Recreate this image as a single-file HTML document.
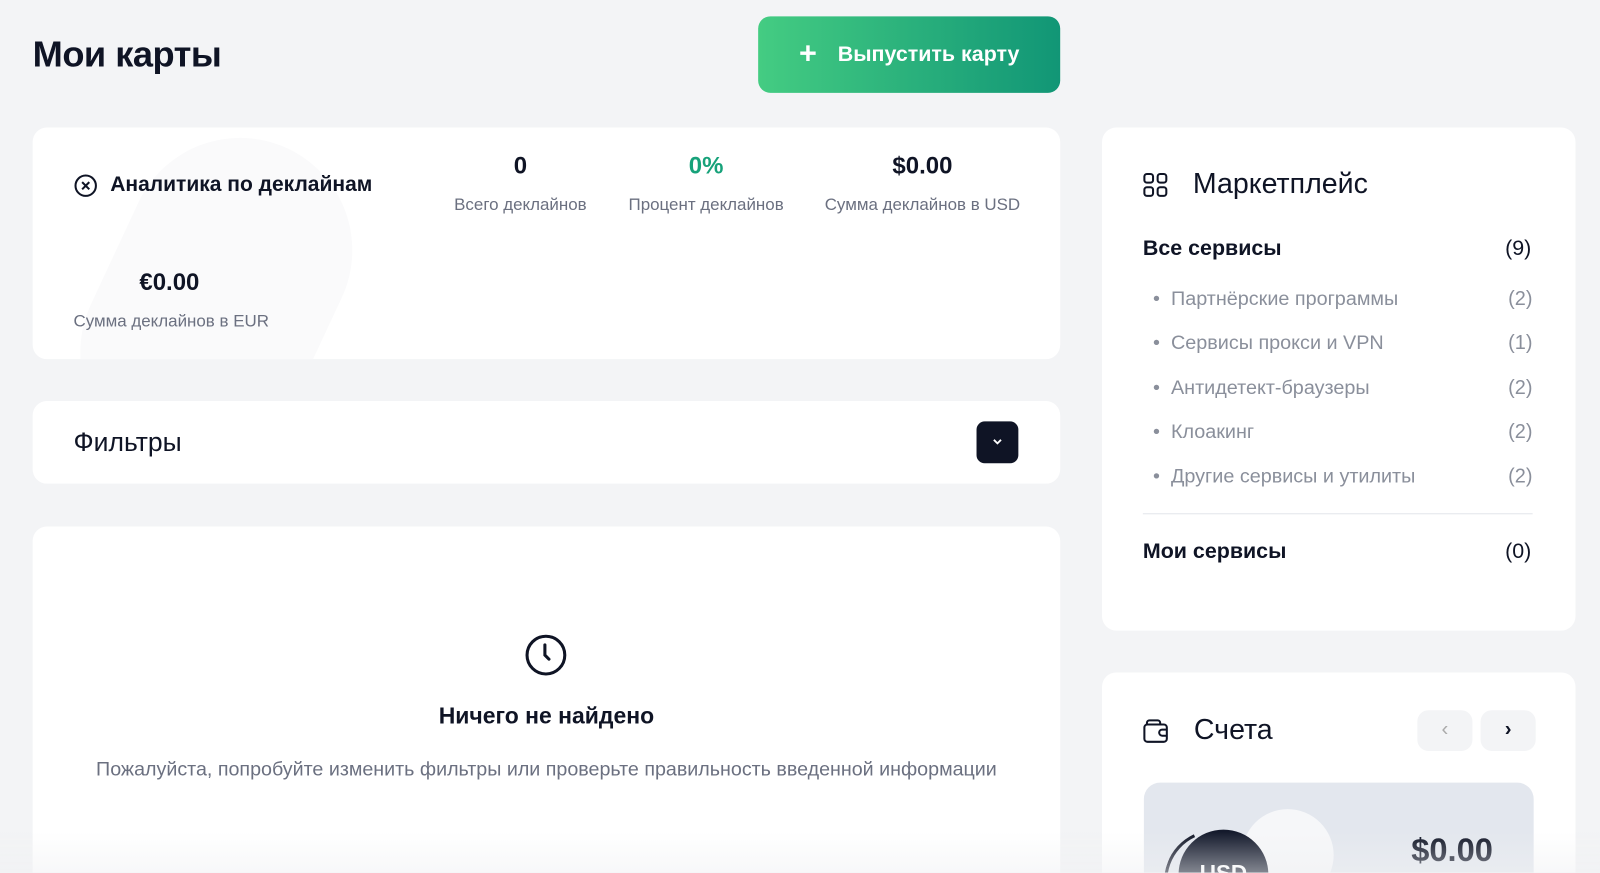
<!DOCTYPE html>
<html><head><meta charset="utf-8"><style>
*{box-sizing:border-box;margin:0;padding:0}
html,body{width:1600px;height:873px;overflow:hidden}
body{background:#f3f4f6;font-family:"Liberation Sans","Noto Sans CJK SC",sans-serif;color:#0f1425;position:relative}
#w{position:absolute;left:0;top:0;width:1568px;height:855px;overflow:hidden;transform:scale(1.0204);transform-origin:0 0}
.a{position:absolute}
.card{position:absolute;background:#fff;border-radius:14px}
.b{font-weight:bold}
.g{color:#6b7080}
.li{position:absolute;left:1130px;font-size:19.4px;color:#8a8f9b}
.cnt{position:absolute;left:1478px;font-size:19.5px;color:#8a8f9b}
</style></head><body><div id="w">
<div class="a b" style="left:32px;top:33px;font-size:35.5px;letter-spacing:-0.5px">Мои карты</div>
<div class="a" style="left:743px;top:16px;width:296px;height:75px;border-radius:12px;background:linear-gradient(90deg,#44cc82,#119676);color:#fff;font-size:21px;font-weight:bold;">
<div class="a" style="left:40px;top:24px;font-size:30px;line-height:26px">+</div>
<div class="a" style="left:78px;top:26px">Выпустить карту</div></div>

<div class="card" style="left:32px;top:125px;width:1007px;height:227px;overflow:hidden">
<div class="a" style="left:70px;top:5px;width:220px;height:330px;border-radius:115px;background:#fafafb;transform:rotate(25deg)"></div>
<svg class="a" style="left:40px;top:45px" width="24" height="24" viewBox="0 0 24 24" fill="none" stroke="#0f1425" stroke-width="2"><circle cx="12" cy="12" r="10"/><path d="M8.5 8.5l7 7M15.5 8.5l-7 7"/></svg>
<div class="a b" style="left:76px;top:44px;font-size:20.6px">Аналитика по деклайнам</div>
<div class="a b" style="left:412px;width:132px;text-align:center;top:24px;font-size:23.5px">0</div>
<div class="a g" style="left:390px;width:176px;text-align:center;top:66px;font-size:16.6px">Всего деклайнов</div>
<div class="a b" style="left:580px;width:160px;text-align:center;top:24px;font-size:23.5px;color:#17a27a">0%</div>
<div class="a g" style="left:560px;width:200px;text-align:center;top:66px;font-size:16.6px">Процент деклайнов</div>
<div class="a b" style="left:772px;width:200px;text-align:center;top:24px;font-size:23.5px">$0.00</div>
<div class="a g" style="left:752px;width:240px;text-align:center;top:66px;font-size:16.6px">Сумма деклайнов в USD</div>
<div class="a b" style="left:40px;width:188px;text-align:center;top:138px;font-size:23.5px">€0.00</div>
<div class="a g" style="left:40px;top:180px;font-size:16.6px">Сумма деклайнов в EUR</div>
</div>

<div class="card" style="left:32px;top:393px;width:1007px;height:81px">
<div class="a" style="left:40px;top:25px;font-size:26px">Фильтры</div>
<div class="a" style="left:925px;top:20px;width:41px;height:41px;border-radius:8px;background:#0f1425"><svg class="a" style="left:15px;top:16px" width="11" height="8" viewBox="0 0 11 8"><path d="M2 2l3.5 3.5L9 2" stroke="#fff" stroke-width="1.8" fill="none"/></svg></div>
</div>

<div class="card" style="left:32px;top:516px;width:1007px;height:339px;border-radius:14px 14px 0 0">
<svg class="a" style="left:482px;top:105px" width="42" height="42" viewBox="0 0 42 42" fill="none" stroke="#0f1425" stroke-width="3"><circle cx="21" cy="21" r="18.5"/><path d="M20 11v10l4 4" stroke-linecap="round"/></svg>
<div class="a b" style="left:0;width:1007px;text-align:center;top:173px;font-size:22.5px">Ничего не найдено</div>
<div class="a g" style="left:0;width:1007px;text-align:center;top:228px;font-size:19.3px">Пожалуйста, попробуйте изменить фильтры или проверьте правильность введенной информации</div>
</div>

<div class="card" style="left:1080px;top:125px;width:464px;height:493px">
<svg class="a" style="left:40px;top:44px" width="25" height="25" viewBox="0 0 25 25" fill="none" stroke="#0f1425" stroke-width="2"><rect x="1.5" y="1.5" width="8.5" height="8.5" rx="2.5"/><rect x="14.5" y="1.5" width="8.5" height="8.5" rx="2.5"/><rect x="1.5" y="14.5" width="8.5" height="8.5" rx="2.5"/><rect x="14.5" y="14.5" width="8.5" height="8.5" rx="2.5"/></svg>
<div class="a" style="left:89px;top:39px;font-size:28px">Маркетплейс</div>
<div class="a b" style="left:40px;top:107px;font-size:21px">Все сервисы</div>
<div class="a" style="left:395px;top:107px;font-size:21px">(9)</div>
<div class="a" style="left:40px;top:378px;width:382px;height:1px;background:#e3e5ea"></div>
<div class="a b" style="left:40px;top:404px;font-size:21px">Мои сервисы</div>
<div class="a" style="left:395px;top:404px;font-size:21px">(0)</div>
</div>
<div class="li" style="top:282px">•&nbsp;&nbsp;Партнёрские программы</div><div class="cnt" style="top:282px">(2)</div>
<div class="li" style="top:325px">•&nbsp;&nbsp;Сервисы прокси и VPN</div><div class="cnt" style="top:325px">(1)</div>
<div class="li" style="top:369px">•&nbsp;&nbsp;Антидетект-браузеры</div><div class="cnt" style="top:369px">(2)</div>
<div class="li" style="top:412px">•&nbsp;&nbsp;Клоакинг</div><div class="cnt" style="top:412px">(2)</div>
<div class="li" style="top:456px">•&nbsp;&nbsp;Другие сервисы и утилиты</div><div class="cnt" style="top:456px">(2)</div>

<div class="card" style="left:1080px;top:659px;width:464px;height:196px;overflow:hidden;border-radius:14px 14px 0 0">
<svg class="a" style="left:40px;top:44px" width="26" height="26" viewBox="0 0 26 26" fill="none" stroke="#0f1425" stroke-width="2"><path d="M4 8V5.5A2.5 2.5 0 0 1 6.5 3h8A2.5 2.5 0 0 1 17 5.5V7"/><rect x="1.5" y="7" width="22" height="17" rx="3"/><path d="M24 12h-5a3 3 0 0 0 0 6h5"/></svg>
<div class="a" style="left:90px;top:40px;font-size:28px">Счета</div>
<div class="a" style="left:309px;top:37px;width:54px;height:40px;border-radius:11px;background:#f3f4f6;color:#aaa;font-size:20px;text-align:center;line-height:38px">‹</div>
<div class="a" style="left:371px;top:37px;width:54px;height:40px;border-radius:11px;background:#f3f4f6;color:#0f1425;font-size:20px;font-weight:bold;text-align:center;line-height:38px">›</div>
<div class="a" style="left:41px;top:108px;width:382px;height:88px;border-radius:16px 16px 0 0;background:#e3e7ee;overflow:hidden">
<div class="a" style="left:96px;top:26px;width:90px;height:90px;border-radius:50%;background:#f6f7f9"></div>
<div class="a" style="left:20px;top:46px;width:100px;height:100px;border-radius:50%;border:3px solid #0f1425;border-right-color:transparent;border-top-color:transparent;transform:rotate(20deg)"></div>
<div class="a" style="left:34px;top:46px;width:88px;height:88px;border-radius:50%;background:#141a2c;color:#fff;font-weight:bold;font-size:22px;text-align:center;padding-top:30px">USD</div>
<div class="a b" style="left:262px;top:48px;font-size:32px">$0.00</div>
</div>
</div>
<div class="a" style="left:0;top:815px;width:1568px;height:40px;background:linear-gradient(rgba(243,244,246,0),rgba(240,241,243,0.5))"></div>
</div></body></html>
